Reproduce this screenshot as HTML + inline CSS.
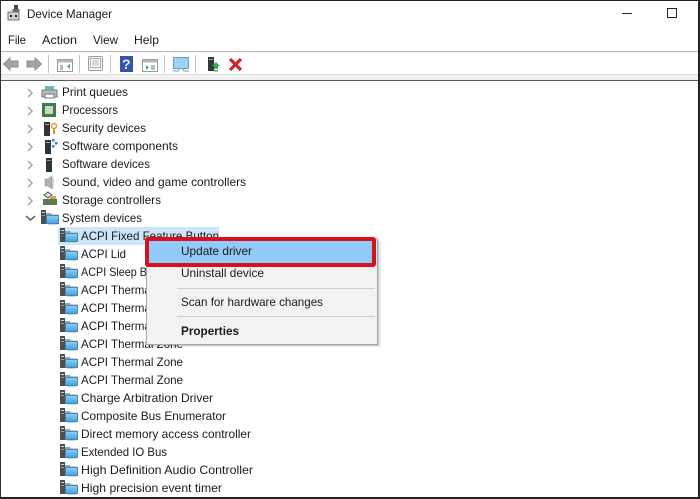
<!DOCTYPE html>
<html><head><meta charset="utf-8"><style>
html,body{margin:0;padding:0;background:#fff;width:700px;height:499px;overflow:hidden}
svg{display:block}
text{font-family:"Liberation Sans",sans-serif;font-size:12px;fill:#1a1a1a}
</style></head><body>
<svg width="700" height="499" viewBox="0 0 700 499" xmlns="http://www.w3.org/2000/svg">
<defs>
<linearGradient id="scr" x1="0" y1="0" x2="0" y2="1"><stop offset="0" stop-color="#8ed0f5"/><stop offset="1" stop-color="#3fa2e4"/></linearGradient>
<g id="sys">
<rect x="0" y="0" width="5" height="14" fill="#4a4f54"/>
<rect x="1" y="2" width="3" height="1" fill="#d0d0d0"/>
<rect x="1" y="5" width="3" height="1" fill="#999"/>
<path d="M5 3h5l1 1.500h6V7H5z" fill="#8fa6b4"/>
<rect x="5.500" y="5.500" width="12" height="8" fill="url(#scr)" stroke="#4f86a8"/>
<rect x="7" y="14" width="9" height="1" fill="#b9d9ee"/>
</g>
<path id="chev" d="M0 0l4 4-4 4" fill="none" stroke="#a6a6a6" stroke-width="1.500"/>
</defs>

<rect width="700" height="499" fill="#fff"/>
<!-- window frame -->
<rect x="0" y="0" width="700" height="1" fill="#222"/>
<rect x="0" y="0" width="1" height="499" fill="#333"/>
<rect x="698" y="0" width="2" height="499" fill="#222"/>
<rect x="0" y="497" width="700" height="2" fill="#222"/>

<!-- title icon -->
<rect x="14" y="5" width="4" height="5" fill="#444"/>
<rect x="12.500" y="9" width="7" height="3" fill="#666"/>
<rect x="8" y="12" width="11" height="8" fill="#cfcfcf" stroke="#777" stroke-width="1"/>
<rect x="10" y="15" width="2" height="2" fill="#222"/>
<rect x="15" y="15" width="2" height="2" fill="#222"/>
<text x="27" y="18" textLength="85" lengthAdjust="spacingAndGlyphs">Device Manager</text>

<!-- window buttons -->
<rect x="622" y="13" width="10" height="1" fill="#222"/>
<rect x="667.500" y="8.500" width="9" height="9" fill="none" stroke="#222" stroke-width="1"/>

<!-- menu -->
<text x="8" y="44" textLength="18" lengthAdjust="spacingAndGlyphs">File</text>
<text x="42" y="44" textLength="35" lengthAdjust="spacingAndGlyphs">Action</text>
<text x="93" y="44" textLength="25" lengthAdjust="spacingAndGlyphs">View</text>
<text x="134" y="44" textLength="25" lengthAdjust="spacingAndGlyphs">Help</text>
<rect x="1" y="51" width="697" height="1" fill="#b4b4b4"/>

<!-- toolbar -->
<path d="M3.500 64l6.500-6v3h8v6h-8v3z" fill="#a4a4a4" stroke="#8c8c8c"/>
<path d="M41.500 64l-6.500-6v3h-8v6h8v3z" fill="#a4a4a4" stroke="#8c8c8c"/>
<rect x="48" y="55" width="1" height="18" fill="#c4c4c4"/>
<rect x="57.500" y="59.500" width="15" height="12" fill="#fff" stroke="#9a9a9a"/>
<rect x="58" y="60" width="14" height="2.500" fill="#b8b8b8"/>
<rect x="60" y="65" width="3" height="5" fill="#bbb"/>
<path d="M70 64v5l-3-2.500z" fill="#4fa85a"/>
<rect x="79" y="55" width="1" height="18" fill="#c4c4c4"/>
<rect x="88.500" y="56.500" width="14" height="14" rx="1" fill="#f2f2f2" stroke="#a0a0a0"/>
<rect x="90.500" y="58.500" width="10" height="9" fill="#fff" stroke="#b0b0b0"/>
<path d="M92 61h7M92 63h7M92 65h7" stroke="#b0b0b0"/>
<rect x="110" y="55" width="1" height="18" fill="#c4c4c4"/>
<rect x="120" y="56" width="13" height="16" fill="#3456a8"/>
<text x="122" y="69" style="font-size:14px;font-weight:bold;fill:#e8eefc">?</text>
<rect x="142.500" y="59.500" width="15" height="12" fill="#fff" stroke="#9a9a9a"/>
<rect x="143" y="60" width="14" height="2.500" fill="#b8b8b8"/>
<path d="M146 65v5l3-2.500z" fill="#4fa85a"/>
<rect x="151" y="65" width="4" height="5" fill="#bbb"/>
<rect x="164" y="55" width="1" height="18" fill="#c4c4c4"/>
<rect x="173.500" y="57.500" width="15" height="11" fill="#9bd3f0" stroke="#6f9fb8"/>
<path d="M180 68l-2 3h-5M182 68l2 3h5" fill="none" stroke="#8a9aa5"/>
<rect x="195" y="55" width="1" height="18" fill="#c4c4c4"/>
<rect x="208" y="57" width="6" height="14" fill="#33383c"/>
<rect x="209" y="59" width="4" height="1" fill="#aaa"/>
<path d="M212 66l4-4 4 4h-2v3h-4v-3z" fill="#2fb34a"/>
<rect x="214" y="70" width="4" height="1.500" fill="#2fb34a"/>
<path d="M230 59l11 11M241 59l-11 11" stroke="#d0222a" stroke-width="3.200" fill="none"/>

<rect x="1" y="74" width="697" height="1" fill="#dedede"/>
<rect x="1" y="75" width="697" height="5" fill="#f1f1f1"/>
<rect x="1" y="80" width="697" height="1" fill="#5a5a5a"/>

<!-- tree: chevrons -->
<use href="#chev" x="28" y="89"/>
<use href="#chev" x="28" y="107"/>
<use href="#chev" x="28" y="125"/>
<use href="#chev" x="28" y="143"/>
<use href="#chev" x="28" y="161"/>
<use href="#chev" x="28" y="179"/>
<use href="#chev" x="28" y="197"/>
<path d="M26 216l4.500 4 4.500-4" fill="none" stroke="#555" stroke-width="1.500"/>

<!-- top level icons -->
<rect x="42" y="90" width="15" height="7" fill="#b8bcc0" stroke="#777" stroke-width="1"/>
<rect x="45" y="86" width="9" height="4" fill="#6cb4b0"/>
<rect x="45" y="94" width="9" height="4" fill="#fff" stroke="#777" stroke-width="1"/>
<rect x="42" y="103" width="14" height="14" fill="#3f7a4a"/>
<rect x="45" y="106" width="8" height="8" fill="#c8d8c8"/>
<rect x="44" y="122" width="6" height="14" fill="#2f3438"/>
<rect x="45" y="124" width="4" height="1" fill="#aaa"/>
<circle cx="54" cy="126" r="2.500" fill="none" stroke="#d0a030" stroke-width="1.500"/>
<rect x="53" y="128" width="2" height="6" fill="#d0a030"/>
<rect x="45" y="140" width="6" height="14" fill="#2f3438"/>
<rect x="46" y="142" width="4" height="1" fill="#aaa"/>
<rect x="52" y="139" width="2.500" height="2.500" fill="#2a7fd0"/>
<rect x="55" y="142" width="2.500" height="2.500" fill="#2a7fd0"/>
<rect x="52" y="145" width="2.500" height="2.500" fill="#2a7fd0"/>
<rect x="46" y="158" width="6" height="14" fill="#2f3438"/>
<rect x="47" y="160" width="4" height="1" fill="#5a9"/>
<path d="M45 179h3l4-3v13l-4-3h-3z" fill="#b0b0b0" stroke="#888" stroke-width=".5"/>
<path d="M53 178v10" stroke="#ccc" stroke-width="1.500"/>
<path d="M44 195l4-3 4 3-4 3z" fill="#ddd" stroke="#555"/>
<rect x="43" y="199" width="14" height="6" fill="#5a7a50"/>
<rect x="50" y="196" width="6" height="3" fill="#c9a94a"/>
<use href="#sys" x="41" y="210"/>

<!-- selection -->
<rect x="58" y="227" width="161" height="18" fill="#cde6f7"/>

<!-- child icons -->
<use href="#sys" x="60" y="228"/>
<use href="#sys" x="60" y="246"/>
<use href="#sys" x="60" y="264"/>
<use href="#sys" x="60" y="282"/>
<use href="#sys" x="60" y="300"/>
<use href="#sys" x="60" y="318"/>
<use href="#sys" x="60" y="336"/>
<use href="#sys" x="60" y="354"/>
<use href="#sys" x="60" y="372"/>
<use href="#sys" x="60" y="390"/>
<use href="#sys" x="60" y="408"/>
<use href="#sys" x="60" y="426"/>
<use href="#sys" x="60" y="444"/>
<use href="#sys" x="60" y="462"/>
<use href="#sys" x="60" y="480"/>

<!-- top level text -->
<text x="62" y="96" textLength="66" lengthAdjust="spacingAndGlyphs">Print queues</text>
<text x="62" y="114" textLength="56" lengthAdjust="spacingAndGlyphs">Processors</text>
<text x="62" y="132" textLength="84" lengthAdjust="spacingAndGlyphs">Security devices</text>
<text x="62" y="150" textLength="116" lengthAdjust="spacingAndGlyphs">Software components</text>
<text x="62" y="168" textLength="88" lengthAdjust="spacingAndGlyphs">Software devices</text>
<text x="62" y="186" textLength="184" lengthAdjust="spacingAndGlyphs">Sound, video and game controllers</text>
<text x="62" y="204" textLength="99" lengthAdjust="spacingAndGlyphs">Storage controllers</text>
<text x="62" y="222" textLength="80" lengthAdjust="spacingAndGlyphs">System devices</text>

<!-- children text -->
<text x="81" y="240" textLength="138" lengthAdjust="spacingAndGlyphs">ACPI Fixed Feature Button</text>
<text x="81" y="258" textLength="45" lengthAdjust="spacingAndGlyphs">ACPI Lid</text>
<text x="81" y="276" textLength="90" lengthAdjust="spacingAndGlyphs">ACPI Sleep Button</text>
<text x="81" y="294" textLength="102" lengthAdjust="spacingAndGlyphs">ACPI Thermal Zone</text>
<text x="81" y="312" textLength="102" lengthAdjust="spacingAndGlyphs">ACPI Thermal Zone</text>
<text x="81" y="330" textLength="102" lengthAdjust="spacingAndGlyphs">ACPI Thermal Zone</text>
<text x="81" y="348" textLength="102" lengthAdjust="spacingAndGlyphs">ACPI Thermal Zone</text>
<text x="81" y="366" textLength="102" lengthAdjust="spacingAndGlyphs">ACPI Thermal Zone</text>
<text x="81" y="384" textLength="102" lengthAdjust="spacingAndGlyphs">ACPI Thermal Zone</text>
<text x="81" y="402" textLength="132" lengthAdjust="spacingAndGlyphs">Charge Arbitration Driver</text>
<text x="81" y="420" textLength="145" lengthAdjust="spacingAndGlyphs">Composite Bus Enumerator</text>
<text x="81" y="438" textLength="170" lengthAdjust="spacingAndGlyphs">Direct memory access controller</text>
<text x="81" y="456" textLength="86" lengthAdjust="spacingAndGlyphs">Extended IO Bus</text>
<text x="81" y="474" textLength="172" lengthAdjust="spacingAndGlyphs">High Definition Audio Controller</text>
<text x="81" y="492" textLength="141" lengthAdjust="spacingAndGlyphs">High precision event timer</text>

<!-- context menu -->
<rect x="149" y="241" width="232" height="106" fill="#000" opacity=".08"/>
<rect x="148" y="240" width="231" height="106" fill="#000" opacity=".14"/>
<rect x="146.500" y="238.500" width="231" height="106" fill="#f2f2f2" stroke="#a8a8a8"/>
<rect x="147" y="239" width="226" height="26" fill="#91c9f7"/>
<rect x="147" y="239" width="227" height="26" fill="none" stroke="#d8101c" stroke-width="4" rx="1"/>
<text x="181" y="255" textLength="71" lengthAdjust="spacingAndGlyphs">Update driver</text>
<text x="181" y="277" textLength="83" lengthAdjust="spacingAndGlyphs">Uninstall device</text>
<rect x="177" y="288" width="198" height="1" fill="#cfcfcf"/>
<text x="181" y="306" textLength="142" lengthAdjust="spacingAndGlyphs">Scan for hardware changes</text>
<rect x="177" y="316" width="198" height="1" fill="#cfcfcf"/>
<text x="181" y="335" textLength="58" lengthAdjust="spacingAndGlyphs" style="font-weight:bold">Properties</text>
</svg>
</body></html>
